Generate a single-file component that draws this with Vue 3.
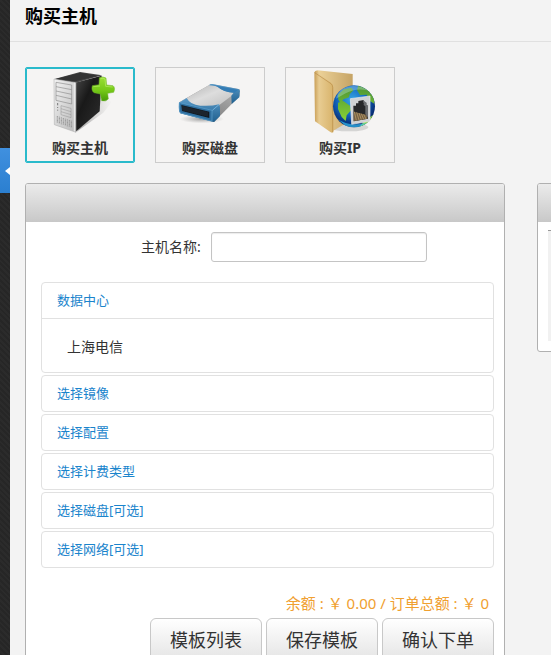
<script setup>
import { ref } from 'vue'

const current = ref('host')
const hostName = ref('')
const opened = ref('dc')

const sections = [
  { id: 'dc', title: '数据中心', body: '上海电信' },
  { id: 'image', title: '选择镜像' },
  { id: 'config', title: '选择配置' },
  { id: 'billing', title: '选择计费类型' },
  { id: 'disk', title: '选择磁盘[可选]' },
  { id: 'network', title: '选择网络[可选]' }
]
const actions = ['模板列表', '保存模板', '确认下单']
const vents = [112, 118, 124, 130, 136, 142, 148, 154]
const slots = [99, 105, 111, 117, 123, 129, 135, 141, 147, 153, 159, 165, 171]
</script>

<template>
  <div class="page">
    <aside class="rail">
      <button class="toggle" type="button" aria-label="展开菜单">
        <svg width="5" height="8" viewBox="0 0 5 8"><path d="M5 0V8L0 4Z" fill="#fff" /></svg>
      </button>
    </aside>
    <main class="main">
      <header class="heading"><h1>购买主机</h1></header>
      <nav class="tiles">
        <button type="button" class="tile" :class="{ active: current === 'host' }" @click="current = 'host'">
          <svg class="art" viewBox="18 24 324 210">
            <defs>
              <linearGradient id="side" x1="0" y1="0" x2="1" y2="1">
                <stop offset="0" stop-color="#4a4a4a" /><stop offset=".4" stop-color="#191919" /><stop offset="1" stop-color="#303030" />
              </linearGradient>
              <linearGradient id="front" x1="0" y1="0" x2="1" y2="1">
                <stop offset="0" stop-color="#f2f2f2" /><stop offset="1" stop-color="#b9b9b9" />
              </linearGradient>
              <linearGradient id="plus" x1="0" y1="0" x2="0" y2="1">
                <stop offset="0" stop-color="#9ade35" /><stop offset=".55" stop-color="#76c918" /><stop offset="1" stop-color="#479b08" />
              </linearGradient>
              <linearGradient id="shade" x1="0" y1="0" x2="1" y2="0">
                <stop offset="0" stop-color="#777" stop-opacity=".7" /><stop offset="1" stop-color="#aaa" stop-opacity="0" />
              </linearGradient>
            </defs>
            <path d="M168 217L240 112L276 125L250 158Z" fill="url(#shade)" />
            <path d="M101 58L180 36L246 46L167 68Z" fill="#484848" />
            <path d="M107 57L181 38L236 47L165 64Z" fill="#333" />
            <path d="M165 68L245 47L239 154L165 217Z" fill="url(#side)" />
            <path d="M102 57L168 68V217L103 194Z" fill="url(#front)" stroke="#aaa" stroke-width="1.5" />
            <path d="M163 68V214" stroke="#eee" stroke-width="3" />
            <path d="M108 67L155 75V132L108 121ZM108 80L155 89M108 93L155 103M108 106L155 117" fill="none" stroke="#858585" stroke-width="1.8" />
            <path d="M123 137L153 145V173L123 164ZM123 146L153 155M123 155L153 164" fill="none" stroke="#959595" stroke-width="1.6" />
            <path d="M113 129V136M113 141V144M113 149V152" stroke="#777" stroke-width="3" />
            <path v-for="(x, i) in vents" :key="x" :d="`M${x} ${168 + i * 2}v21`" stroke="#888" stroke-width="2.5" stroke-dasharray="3 1" />
            <path d="M238 53Q248 48 258 54L260 75L279 77Q287 83 281 97L263 100L265 117Q257 126 245 122L241 102L222 98Q213 91 217 77L237 74Z" fill="url(#plus)" stroke="#6fb52b" stroke-width="1.5" />
            <path d="M242 56Q249 53 255 57L257 79L278 81M240 78L220 80" fill="none" stroke="#b5ed65" stroke-width="2" />
          </svg>
          <span>购买主机</span>
        </button>
        <button type="button" class="tile" :class="{ active: current === 'disk' }" @click="current = 'disk'">
          <svg class="art" viewBox="18 24 324 210">
            <defs>
              <linearGradient id="metal" x1="0" y1="0" x2="1" y2="1">
                <stop offset="0" stop-color="#aaa" /><stop offset=".45" stop-color="#ddd" /><stop offset="1" stop-color="#b5b5b5" />
              </linearGradient>
              <linearGradient id="blue" x1="0" y1="0" x2="0" y2="1">
                <stop offset="0" stop-color="#5a9ac8" /><stop offset="1" stop-color="#20608f" />
              </linearGradient>
              <linearGradient id="flank" x1="0" y1="1" x2="1" y2="0">
                <stop offset="0" stop-color="#666" /><stop offset="1" stop-color="#bbb" />
              </linearGradient>
              <radialGradient id="floor"><stop offset="0" stop-color="#666" stop-opacity=".6" /><stop offset="1" stop-color="#888" stop-opacity="0" /></radialGradient>
            </defs>
            <ellipse cx="155" cy="177" rx="67" ry="13" fill="url(#floor)" />
            <path d="M88 127L183 72L269 88V108L192 186L91 160Q86 145 88 127Z" fill="url(#flank)" />
            <path d="M88 127L183 72L269 89L187 151Z" fill="url(#metal)" />
            <path d="M177 76Q181 71 187 72L265 87Q272 90 269 98L268 112L245 132L244 107L251 98Q219 96 202 79Z" fill="url(#blue)" />
            <path d="M188 75L264 90L253 98Q220 96 202 80Z" fill="#347db5" />
            <path d="M87 128L110 114Q120 134 151 137Q184 139 207 133L210 142V168L192 186L91 160Q85 157 87 128Z" fill="url(#blue)" />
            <path d="M88 128L186 151V184L92 159Q87 157 88 128Z" fill="#2f6f9f" stroke="#5da3d0" stroke-width="2" />
            <path d="M187 151L208 133" stroke="#8bc5ed" stroke-width="2" />
            <path d="M94 135L178 155V174L96 153Z" fill="#101820" />
            <path v-for="(x, i) in slots" :key="x" :d="`M${x} ${138 + i * 1.45}v14`" stroke="#4a5660" stroke-width="1.3" />
          </svg>
          <span>购买磁盘</span>
        </button>
        <button type="button" class="tile" :class="{ active: current === 'ip' }" @click="current = 'ip'">
          <svg class="art" viewBox="18 24 324 210">
            <defs>
              <linearGradient id="paper" x1="0" y1="0" x2="1" y2="0">
                <stop offset="0" stop-color="#c99f57" /><stop offset=".25" stop-color="#e8cc92" /><stop offset="1" stop-color="#d8b36b" />
              </linearGradient>
              <linearGradient id="back" x1="0" y1="0" x2="1" y2="0">
                <stop offset="0" stop-color="#eed49b" /><stop offset="1" stop-color="#c6a465" />
              </linearGradient>
              <radialGradient id="sea" cx=".45" cy=".35" r=".65">
                <stop offset="0" stop-color="#36a6e5" /><stop offset=".55" stop-color="#1265bd" /><stop offset="1" stop-color="#051f61" />
              </radialGradient>
              <linearGradient id="land" x1="0" y1="0" x2="0" y2="1">
                <stop offset="0" stop-color="#4b9334" /><stop offset="1" stop-color="#92dc36" />
              </linearGradient>
              <clipPath id="ball"><circle cx="222" cy="139" r="63" /></clipPath>
            </defs>
            <ellipse cx="207" cy="202" rx="58" ry="12" fill="#777" opacity=".25" />
            <path d="M112 31L218 42V178L155 215L110 185Z" fill="url(#back)" />
            <path d="M103 37Q106 30 114 32L117 43L153 68Q160 72 160 81V217Q156 220 151 216L105 184Z" fill="url(#paper)" />
            <path d="M104 38L153 71Q158 75 158 83V216" fill="none" stroke="#b88d49" stroke-width="2" />
            <circle cx="222" cy="139" r="63" fill="url(#sea)" />
            <g clip-path="url(#ball)">
              <path d="M174 104L191 88L214 83L220 91L209 103L207 112L190 118L183 131L175 119ZM174 128L190 123L210 137L213 151L200 166L197 183L185 171L174 147ZM235 75L263 84L283 112L283 131L266 121L260 104L240 105L231 91ZM251 186L280 164L269 188L238 201Z" fill="url(#land)" />
              <path d="M168 116Q177 80 220 78Q248 78 263 91Q227 83 197 100Q177 112 168 116Z" fill="#d7f7ff" opacity=".3" />
              <path d="M174 178Q208 202 260 188L240 203H203Z" fill="#38c7fb" opacity=".65" />
            </g>
            <path d="M211 116L270 108V184L215 193Z" fill="#d0d2d4" stroke="#ececec" stroke-width="2" />
            <path d="M220 137H228V130H235V123L251 120V128H259V135L264 137V176L221 184Z" fill="#27282a" />
            <path d="M221 155L262 165V176L221 184Z" fill="#756044" />
            <path d="M223 155L229 181M230 157L237 180M237 159L244 179M244 161L251 178M251 163L258 177" stroke="#c7aa70" stroke-width="2" />
            <path d="M252 122L259 128V135L264 138V173L256 162V139L251 135Z" fill="#6b6d70" />
          </svg>
          <span>购买IP</span>
        </button>
      </nav>

      <div class="columns">
        <section class="panel order">
          <div class="bar"></div>
          <form class="content" @submit.prevent>
            <div class="field">
              <label for="host-name">主机名称:</label>
              <input id="host-name" v-model="hostName" type="text" />
            </div>
            <div class="accordion">
              <div v-for="s in sections" :key="s.id" class="item">
                <a href="#" @click.prevent="opened = s.id">{{ s.title }}</a>
                <div v-if="s.body && opened === s.id" class="body">{{ s.body }}</div>
              </div>
            </div>
            <p class="total">余额 : ￥ 0.00 / 订单总额 : ￥ 0</p>
            <div class="actions">
              <button v-for="a in actions" :key="a" type="button">{{ a }}</button>
            </div>
          </form>
        </section>
        <section class="panel summary">
          <div class="bar"></div>
          <div class="list"></div>
        </section>
      </div>
    </main>
  </div>
</template>

<style>
body {
  margin: 0;
}
</style>

<style scoped>
* {
  box-sizing: border-box;
}
.page {
  display: flex;
  height: 100vh;
  overflow: hidden;
  background: #f3f3f3;
  color: #333;
  font: 14px/20px "Noto Sans", "Noto Sans CJK SC", sans-serif;
}
button {
  font-family: inherit;
  cursor: pointer;
}
.rail {
  flex: 0 0 10px;
  padding-top: 148px;
  background: repeating-linear-gradient(45deg, #262626 0 2px, #2b2b2b 2px 4px);
}
.toggle {
  display: flex;
  align-items: center;
  justify-content: flex-end;
  width: 100%;
  height: 45px;
  padding: 0;
  border: 0;
  background: linear-gradient(#4090df, #2b7fd0);
}
.main {
  flex: 1;
  min-width: 0;
}
.heading {
  height: 42px;
  padding: 4px 15px;
  border-bottom: 1px solid #e0e0e0;
}
h1 {
  margin: 0;
  color: #000;
  font-size: 18px;
  line-height: 24px;
}
.tiles {
  display: flex;
  gap: 20px;
  padding: 25px 15px 20px;
}
.tile {
  display: flex;
  flex-direction: column;
  align-items: center;
  width: 110px;
  height: 96px;
  padding: 0;
  border: 1px solid #ccc;
  background: #f5f4f3;
  color: #333;
  font-size: 14px;
  font-weight: bold;
  line-height: 20px;
}
.tile.active {
  border-color: #29bacb;
  border-radius: 2px;
  box-shadow: inset 0 0 0 1px #29bacb;
}
.art {
  width: 108px;
  height: 70px;
}
.columns {
  display: flex;
  align-items: flex-start;
  gap: 32px;
  padding-left: 15px;
}
.panel {
  border: 1px solid #b0b0b0;
  border-radius: 3px;
  background: #fff;
}
.order {
  flex: 1 0 480px;
}
.summary {
  flex: 0 0 270px;
  padding-bottom: 10px;
}
.bar {
  height: 38px;
  border-radius: 2px 2px 0 0;
  background: linear-gradient(#ebebeb, #c8c8c8);
}
.list {
  height: 111px;
  margin: 8px 10px 0;
  border-top: 1px solid #999;
  background: #f1f1f1;
}
.content {
  padding: 10px 10px 20px 15px;
}
.field {
  display: flex;
  align-items: center;
  gap: 10px;
  padding-left: 100px;
}
.field input {
  width: 216px;
  height: 30px;
  padding: 4px 6px;
  border: 1px solid #c4c4c4;
  border-radius: 3px;
  background: #fff;
  box-shadow: inset 0 1px 1px #ececec;
  font: inherit;
}
.accordion {
  display: grid;
  gap: 2px;
  margin-top: 20px;
}
.item {
  border: 1px solid #e1e1e1;
  border-radius: 4px;
}
.item a {
  display: block;
  padding: 7px 15px 8px;
  color: #1a84cc;
  font-size: 13px;
  text-decoration: none;
}
.body {
  padding: 18px 25px 15px;
  border-top: 1px solid #e1e1e1;
}
.total {
  margin: 24px 5px 4px;
  color: #f0a030;
  font-size: 15px;
  line-height: 22px;
  text-align: right;
}
.actions {
  display: flex;
  justify-content: flex-end;
  gap: 4px;
}
.actions button {
  width: 112px;
  height: 44px;
  padding: 0;
  border: 1px solid #c8c8c8;
  border-radius: 6px;
  background: linear-gradient(#fff, #e4e4e4);
  color: #333;
  font-size: 18px;
  line-height: 24px;
}
</style>
